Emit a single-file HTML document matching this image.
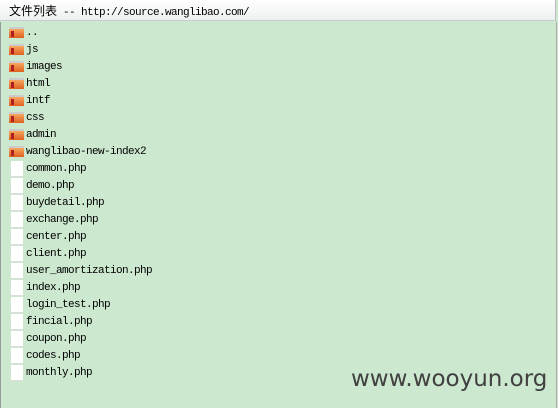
<!DOCTYPE html><html><head><style>
body{margin:0;width:558px;height:408px;overflow:hidden;background:#cce8cf;font-family:"Liberation Mono","Noto Sans CJK SC",monospace;}
.hd{position:absolute;left:0;top:0;width:556px;height:21px;background:linear-gradient(#fff,#eef0f0);border-bottom:1px solid #c8cccc;border-right:1px solid #bbb;font-size:11px;letter-spacing:-0.6px;line-height:22px;padding-left:9px;box-sizing:border-box;color:#000}
.hd b{font-weight:normal;font-size:12px;letter-spacing:0;font-family:"Noto Sans CJK SC",sans-serif}
.lb{position:absolute;left:0;top:22px;width:1px;height:386px;background:#999}
.rb{position:absolute;left:556px;top:22px;width:1px;height:386px;background:#aaa}
.r{position:absolute;left:9px;height:17px;font-size:11px;letter-spacing:-0.6px;line-height:17px;color:#000}
.r span{position:absolute;left:17px;top:1px;white-space:pre}
.f{position:absolute;top:3px;left:0;width:15px;height:11px;background:linear-gradient(#f6a860,#e06020);border-top:2px solid #ccc;box-sizing:border-box}
.f:after{content:"";position:absolute;left:2px;top:2px;width:3px;height:6px;background:#b02020}
.p{position:absolute;top:1px;left:2px;width:12px;height:15px;background:#fff;border-bottom:1px solid #ddd}
.w{position:absolute;left:351px;top:366px;font-family:"DejaVu Sans","Liberation Sans",sans-serif;font-size:23px;color:#404040}
</style></head><body>
<div class="hd"><b>文件列表</b> -- http://source.wanglibao.com/</div>
<div class="lb"></div><div class="rb"></div>
<div class="r" style="top:24px"><i class="f"></i><span>..</span></div>
<div class="r" style="top:41px"><i class="f"></i><span>js</span></div>
<div class="r" style="top:58px"><i class="f"></i><span>images</span></div>
<div class="r" style="top:75px"><i class="f"></i><span>html</span></div>
<div class="r" style="top:92px"><i class="f"></i><span>intf</span></div>
<div class="r" style="top:109px"><i class="f"></i><span>css</span></div>
<div class="r" style="top:126px"><i class="f"></i><span>admin</span></div>
<div class="r" style="top:143px"><i class="f"></i><span>wanglibao-new-index2</span></div>
<div class="r" style="top:160px"><i class="p"></i><span>common.php</span></div>
<div class="r" style="top:177px"><i class="p"></i><span>demo.php</span></div>
<div class="r" style="top:194px"><i class="p"></i><span>buydetail.php</span></div>
<div class="r" style="top:211px"><i class="p"></i><span>exchange.php</span></div>
<div class="r" style="top:228px"><i class="p"></i><span>center.php</span></div>
<div class="r" style="top:245px"><i class="p"></i><span>client.php</span></div>
<div class="r" style="top:262px"><i class="p"></i><span>user_amortization.php</span></div>
<div class="r" style="top:279px"><i class="p"></i><span>index.php</span></div>
<div class="r" style="top:296px"><i class="p"></i><span>login_test.php</span></div>
<div class="r" style="top:313px"><i class="p"></i><span>fincial.php</span></div>
<div class="r" style="top:330px"><i class="p"></i><span>coupon.php</span></div>
<div class="r" style="top:347px"><i class="p"></i><span>codes.php</span></div>
<div class="r" style="top:364px"><i class="p"></i><span>monthly.php</span></div>
<div class="w">www.wooyun.org</div>
</body></html>
